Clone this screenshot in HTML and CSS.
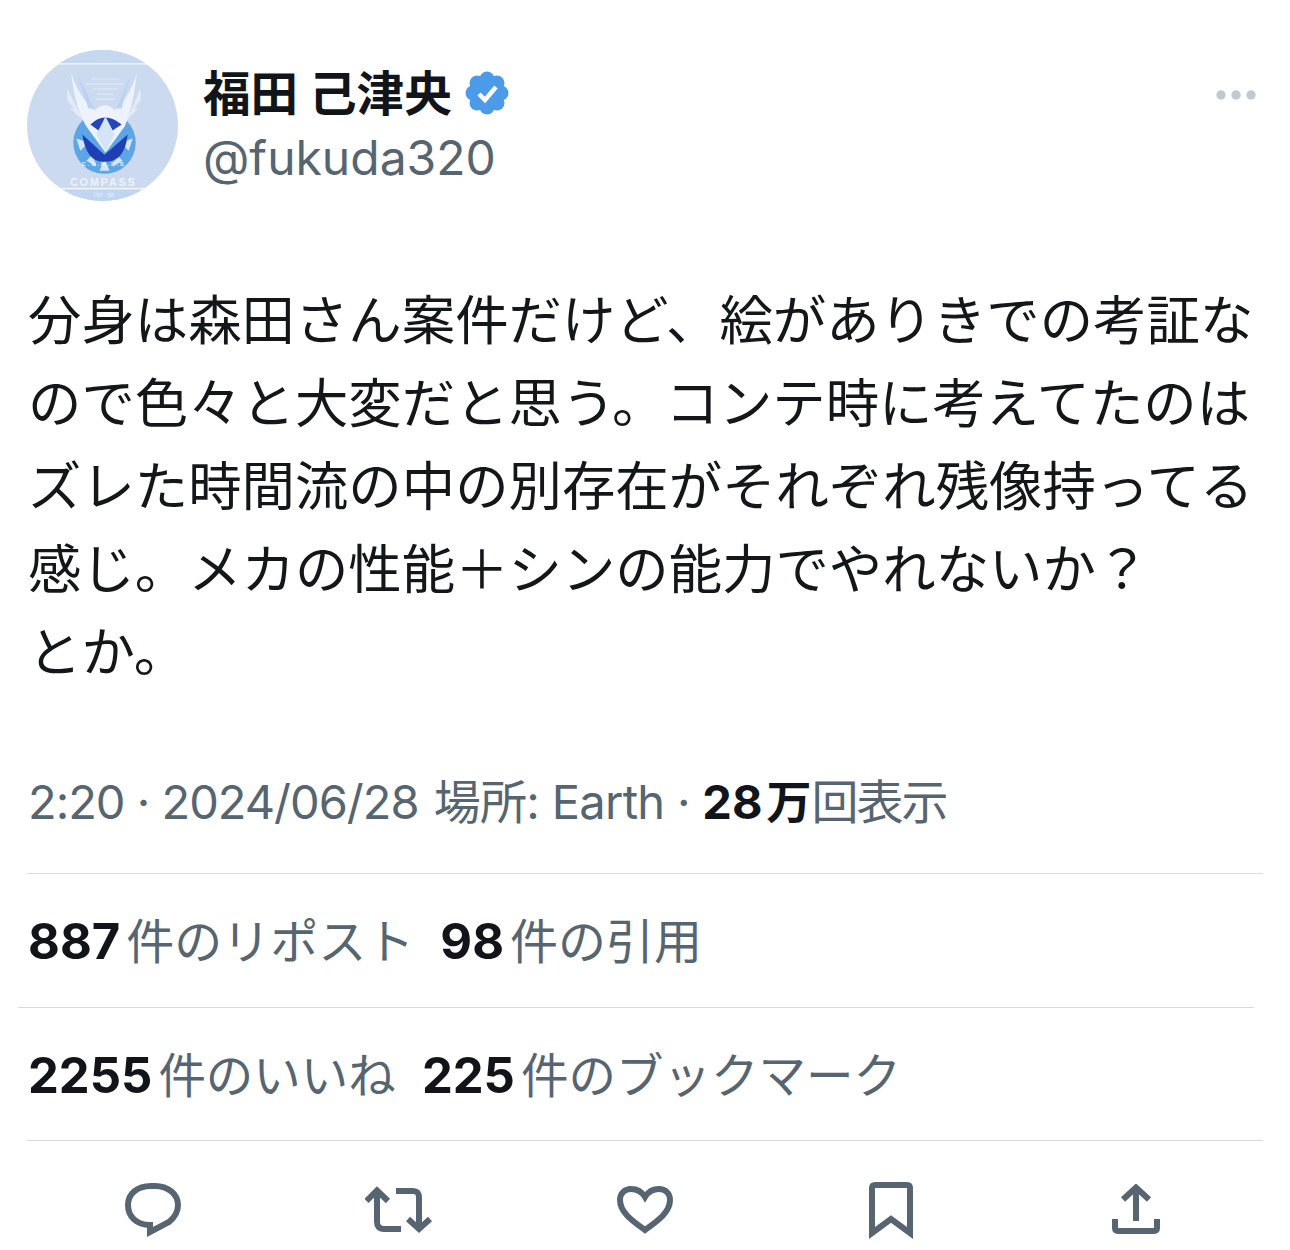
FILE: index.html
```html
<!DOCTYPE html>
<html lang="ja">
<head>
<meta charset="utf-8">
<title>Tweet</title>
<link rel="stylesheet" href="styles.css">
</head>
<body>
<main class="tweet">
  <header class="head">
    <svg class="avatar" viewBox="0 0 150 150" aria-hidden="true">
      <defs><clipPath id="ac"><circle cx="75" cy="75" r="75"/></clipPath></defs>
      <g clip-path="url(#ac)">
        <rect width="150" height="150" fill="#cbdaef"/>
        <rect y="0" width="150" height="13" fill="#c6d8f0"/>
        <rect y="13" width="150" height="1.5" fill="#eef4fb"/>
        <rect y="138" width="150" height="12" fill="#bfd5f0"/>
        <rect y="137" width="150" height="1.5" fill="#f1f6fc"/>
        <g fill="#dbe5f4">
          <rect x="64" y="28" width="26" height="1.5"/>
          <rect x="59" y="33" width="36" height="1.5"/>
          <rect x="66" y="38" width="24" height="1.5"/>
          <rect x="70" y="43" width="16" height="1.5"/>
          <rect x="68" y="48" width="20" height="1.5"/>
        </g>
        <circle cx="77" cy="92" r="31" fill="#5ca6e8"/>
        <path d="M77 58 L82 70 L72 70Z M49 88 L61 92 L53 100Z M105 88 L93 92 L101 100Z M59 110 L65 104 L69 116Z M95 110 L89 104 L85 116Z M77 108 L82 120 L72 120Z" fill="#d3e6f8"/>
        <path d="M55 84 Q59 112 77 111 Q97 112 100 84 L77 104Z" fill="#1f3fb5"/>
        <path d="M44 23 C46 44 51 62 59 76 L78 102 L97 76 C103 62 107 44 109 23 C104 40 96 52 87 60 Q78 50 67 60 C57 50 49 40 44 23Z" fill="#edf2fc"/>
        <path d="M40 38 L56 70 L43 58 L47 58 L40 50Z M113 38 L99 70 L110 58 L106 58 L113 50Z" fill="#e3ebf9"/>
        <path d="M50 24 L67 58 L61 58Z M103 24 L89 58 L94 58Z" fill="#bcd2f1"/>
        <path d="M63 74 Q77 60 94 74 L85 80 L78 68 L71 80Z" fill="#2347b8"/>
        <path d="M78 66 L87 84 L78 101 L69 84Z" fill="#d5e5f7"/>
        <text class="av-motto" x="77" y="115">C . O . M . P . S .</text>
        <text class="av-title" x="76" y="135">COMPASS</text>
        <text class="av-small" x="76" y="146">©ST · SR</text>
      </g>
    </svg>
    <div class="names">
      <div class="name-row">
        <span class="name">福田 己津央</span>
        <svg class="badge" viewBox="0 0 44 44" aria-hidden="true">
          <g fill="#4b9be9">
            <circle cx="22" cy="22" r="16"/>
            <circle cx="22" cy="8" r="7.5"/><circle cx="32" cy="12" r="7.5"/><circle cx="36" cy="22" r="7.5"/><circle cx="32" cy="32" r="7.5"/>
            <circle cx="22" cy="36" r="7.5"/><circle cx="12" cy="32" r="7.5"/><circle cx="8" cy="22" r="7.5"/><circle cx="12" cy="12" r="7.5"/>
          </g>
          <path d="M14 23l6 6 11-13" fill="none" stroke="#fff" stroke-width="4.5"/>
        </svg>
      </div>
      <div class="handle">@fukuda320</div>
    </div>
    <svg class="more" viewBox="0 0 40 10" aria-hidden="true">
      <circle cx="5" cy="5" r="4.7"/><circle cx="20" cy="5" r="4.7"/><circle cx="35" cy="5" r="4.7"/>
    </svg>
  </header>

  <p class="body-text">分身は森田さん案件だけど、絵がありきでの考証な<br>ので色々と大変だと思う。コンテ時に考えてたのは<br>ズレた時間流の中の別存在がそれぞれ残像持ってる<br>感じ。メカの性能＋シンの能力でやれないか？<br>とか。</p>

  <div class="meta"><span class="meta-time">2:20 · 2024/06/28 </span><span class="meta-place">場所: Earth · </span><b class="num-meta">28<span class="unit">万</span></b><span class="meta-views">回表示</span></div>
  <div class="rule"></div>
  <div class="stats stats-reposts"><span><b class="num">887</b>件のリポスト</span><span><b class="num">98</b>件の引用</span></div>
  <div class="rule rule-shift"></div>
  <div class="stats stats-likes"><span><b class="num">2255</b>件のいいね</span><span><b class="num">225</b>件のブックマーク</span></div>
  <div class="rule"></div>

  <nav class="actions">
    <svg class="icon icon-reply" viewBox="0 0 58 56" aria-hidden="true"><path d="M26 43C12 43 4 34 4 23 4 12 13 4 27 4H31C44 4 54 12 54 23 54 31 50 36 45 40L26 50Z"/></svg>
    <svg class="icon icon-repost" viewBox="0 0 68 48" aria-hidden="true"><path d="M1.5 15L12 4.5 23 15M12 5V36c0 4 2 7 7 7H36M31 5H48c5 0 6 3 6 7V42M43 33L54 43 65 33"/></svg>
    <svg class="icon icon-like" viewBox="0 0 58 50" aria-hidden="true"><path d="M29 45C18 37 4 28 4 15 4 8 9 4 15 4 21 4 26 7 29 12 32 7 37 4 43 4 49 4 54 8 54 15 54 28 40 37 29 45Z"/></svg>
    <svg class="icon icon-mark" viewBox="0 0 46 59" aria-hidden="true"><path d="M4 52V7C4 5 5 4 7 4H39C41 4 42 5 42 7V52L23 38Z"/></svg>
    <svg class="icon icon-share" viewBox="0 0 52 52" aria-hidden="true"><path d="M25 3V37M12 15.5L25 3.5 38 15.5M4 35V44C4 46.5 6 47 8 47H42C44 47 46 46.5 46 44V35"/></svg>
  </nav>
</main>
</body>
</html>
```
FILE: styles.css
```css
html, body { margin: 0; padding: 0; background: #fff; }
body { width: 1290px; height: 1250px; overflow: hidden; font-family: "Inter", "Noto Sans CJK JP", sans-serif; color: #566570; }
.tweet { padding: 50px 27px 0 27px; display: flex; flex-direction: column; }
.head { display: flex; align-items: flex-start; height: 150px; }
.avatar { width: 151px; height: 151px; flex: none; }
.av-motto, .av-title, .av-small { text-anchor: middle; font-family: "Liberation Sans", sans-serif; fill: #edf3fb; }
.av-motto { font-size: 6px; font-weight: 700; }
.av-title { font-size: 10.5px; font-weight: 700; letter-spacing: 2px; }
.av-small { font-size: 5px; }
.names { margin-left: 25px; flex: 1; padding-top: 10px; }
.name-row { display: flex; align-items: center; gap: 13px; height: 62px; }
.name { font-size: 47.6px; font-weight: 700; color: #111418; line-height: 62px; font-family: "Noto Sans CJK JP", sans-serif; }
.badge { width: 44px; height: 44px; margin-top: 4px; }
.handle { font-size: 48px; line-height: 62px; color: #566570; margin-top: 5px; }
.more { width: 40px; height: 10px; fill: #bfcad3; margin: 40px 7px 0 0; }
.body-text { margin: 75px 0 0 1px; font-size: 53.4px; line-height: 83px; color: #14171a; font-family: "Noto Sans CJK JP", sans-serif; font-weight: 400; white-space: nowrap; }
.meta { margin: 81px 0 39px 1px; font-size: 47px; line-height: 62px; white-space: pre; }
.meta-time { letter-spacing: -1px; }
.meta-place { letter-spacing: -0.7px; margin-left: 3px; }
.meta-views { letter-spacing: -2px; }
.num-meta { font-weight: 700; color: #111418; }
.unit { margin-left: 4px; font-size: 45px; }
.rule { height: 1px; background: #d9dcdf; flex: none; }
.rule-shift { margin: 0 9px 0 -9px; }
.stats { display: flex; height: 133px; align-items: center; font-size: 47.5px; line-height: 62px; padding-left: 1px; padding-top: 3px; box-sizing: border-box; }
.stats-reposts { gap: 26px; font-size: 48px; }
.stats-likes { gap: 26px; height: 132px; }
.num { font-weight: 700; color: #111418; font-size: 49px; margin-right: 6px; }
.actions { display: grid; grid-template-columns: repeat(5, 246px); justify-items: center; align-items: center; height: 60px; padding-left: 3px; margin-top: 39px; }
.icon { display: block; fill: none; stroke: #566570; stroke-width: 6; stroke-miterlimit: 10; }
.icon-reply { width: 58px; height: 56px; }
.icon-repost { width: 68px; height: 48px; }
.icon-like { width: 58px; height: 50px; }
.icon-mark { width: 46px; height: 59px; }
.icon-share { width: 52px; height: 52px; }
```
